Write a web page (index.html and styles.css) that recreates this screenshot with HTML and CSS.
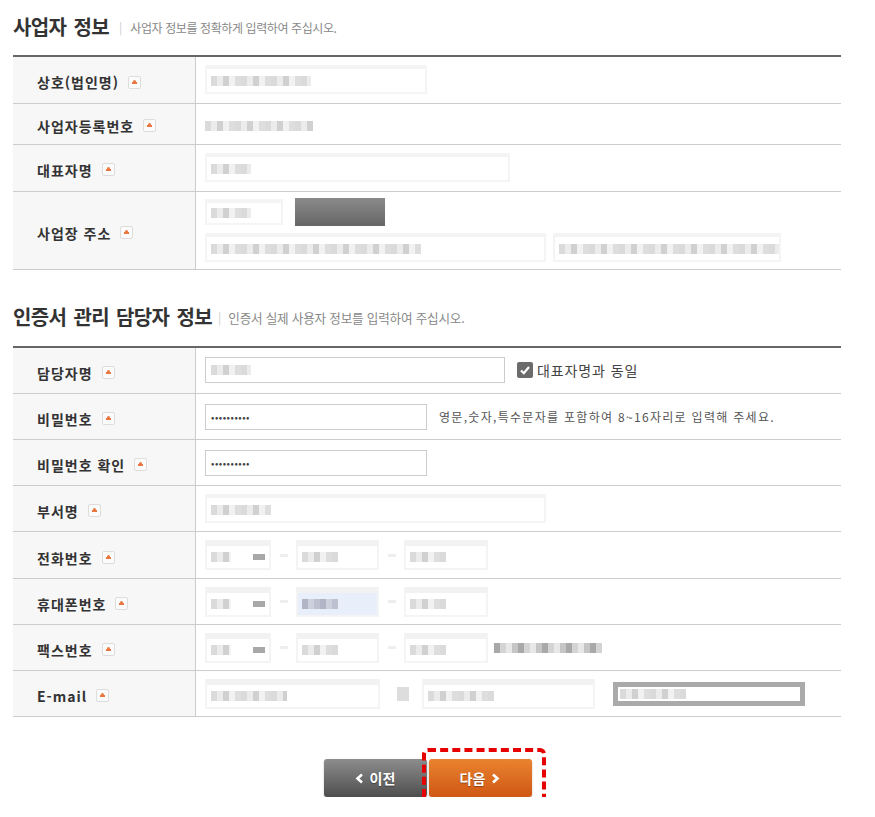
FILE: index.html
```html
<!DOCTYPE html>
<html lang="ko">

<head>
    <meta charset="UTF-8">
    <meta name="viewport" content="width=device-width, initial-scale=1.0">
    <title>사업자 정보 입력</title>
    <link rel="stylesheet" href="styles.css">
</head>

<body>
    <div class="wrap">
        <div class="sec-head">
            <h2>사업자 정보</h2>
            <span class="bar">|</span>
            <span class="desc">사업자 정보를 정확하게 입력하여 주십시오.</span>
        </div>

        <table class="form-table">
            <tr class="h47">
                <th><span class="lbl">상호(법인명)</span><span class="req"></span></th>
                <td><div class="box w222"><span class="mosaic m100"></span></div></td>
            </tr>
            <tr class="h41">
                <th><span class="lbl">사업자등록번호</span><span class="req"></span></th>
                <td><span class="mosaic m108"></span></td>
            </tr>
            <tr class="h47">
                <th><span class="lbl">대표자명</span><span class="req"></span></th>
                <td><div class="box w305"><span class="mosaic m40"></span></div></td>
            </tr>
            <tr class="h78">
                <th><span class="lbl">사업장 주소</span><span class="req"></span></th>
                <td>
                    <div class="line">
                        <div class="box w78 short"><span class="mosaic m40"></span></div>
                        <div class="dark-btn"></div>
                    </div>
                    <div class="line">
                        <div class="box w341"><span class="mosaic m210"></span></div>
                        <div class="box w228"><span class="mosaic m220"></span></div>
                    </div>
                </td>
            </tr>
        </table>

        <div class="sec-head second">
            <h2>인증서 관리 담당자 정보</h2>
            <span class="bar">|</span>
            <span class="desc">인증서 실제 사용자 정보를 입력하여 주십시오.</span>
        </div>

        <table class="form-table">
            <tr class="h47">
                <th><span class="lbl">담당자명</span><span class="req"></span></th>
                <td>
                    <div class="line">
                        <div class="input w300"><span class="mosaic m40"></span></div>
                        <label class="check"><span class="cbox"><svg width="12" height="12" viewBox="0 0 12 12"><path d="M2 6.5 L4.8 9.2 L10 3" fill="none" stroke="#fff" stroke-width="2.2"/></svg></span>대표자명과 동일</label>
                    </div>
                </td>
            </tr>
            <tr>
                <th><span class="lbl">비밀번호</span><span class="req"></span></th>
                <td>
                    <div class="line">
                        <div class="input w222 dots">••••••••••</div>
                        <span class="hint">영문,숫자,특수문자를 포함하여 8~16자리로 입력해 주세요.</span>
                    </div>
                </td>
            </tr>
            <tr>
                <th><span class="lbl">비밀번호 확인</span><span class="req"></span></th>
                <td><div class="input w222 dots">••••••••••</div></td>
            </tr>
            <tr>
                <th><span class="lbl">부서명</span><span class="req"></span></th>
                <td><div class="box w341"><span class="mosaic m60"></span></div></td>
            </tr>
            <tr class="h47">
                <th><span class="lbl">전화번호</span><span class="req"></span></th>
                <td>
                    <div class="line">
                        <div class="box tall w66"><span class="mosaic m20"></span><span class="mosaic m12 dk"></span></div>
                        <span class="dash"></span>
                        <div class="box tall w83"><span class="mosaic m36"></span></div>
                        <span class="dash"></span>
                        <div class="box tall w84"><span class="mosaic m36"></span></div>
                    </div>
                </td>
            </tr>
            <tr>
                <th><span class="lbl">휴대폰번호</span><span class="req"></span></th>
                <td>
                    <div class="line">
                        <div class="box tall w66"><span class="mosaic m20"></span><span class="mosaic m12 dk"></span></div>
                        <span class="dash"></span>
                        <div class="box tall w83 blue"><span class="mosaic m36 bl"></span></div>
                        <span class="dash"></span>
                        <div class="box tall w84"><span class="mosaic m36"></span></div>
                    </div>
                </td>
            </tr>
            <tr>
                <th><span class="lbl">팩스번호</span><span class="req"></span></th>
                <td>
                    <div class="line">
                        <div class="box tall w66"><span class="mosaic m20"></span><span class="mosaic m12 dk"></span></div>
                        <span class="dash"></span>
                        <div class="box tall w83"><span class="mosaic m36"></span></div>
                        <span class="dash"></span>
                        <div class="box tall w84"><span class="mosaic m36"></span></div>
                        <span class="mosaic m108 fax"></span>
                    </div>
                </td>
            </tr>
            <tr>
                <th><span class="lbl">E-mail</span><span class="req"></span></th>
                <td>
                    <div class="line">
                        <div class="box tall w175"><span class="mosaic m76"></span></div>
                        <span class="at"></span>
                        <div class="box tall w173"><span class="mosaic m66"></span></div>
                        <div class="select"><span class="mosaic m66"></span></div>
                    </div>
                </td>
            </tr>
        </table>

        <div class="actions">
            <button class="btn btn-prev"><svg width="9" height="11" viewBox="0 0 9 11"><path d="M7 1.5 L2.5 5.5 L7 9.5" fill="none" stroke="#fff" stroke-width="2.6"/></svg>이전</button>
            <div class="next-wrap">
                <button class="btn btn-next">다음<svg width="9" height="11" viewBox="0 0 9 11"><path d="M2 1.5 L6.5 5.5 L2 9.5" fill="none" stroke="#fff" stroke-width="2.6"/></svg></button>
                <span class="focus-mark"></span>
            </div>
        </div>
    </div>
</body>

</html>
```

FILE: styles.css
```css
body {
    margin: 0;
    background: #fff;
    font-family: "Noto Sans CJK KR", "Noto Sans", sans-serif;
    color: #333;
}

.wrap {
    width: 828px;
    margin-left: 13px;
}

.sec-head {
    height: 52px;
    display: flex;
    align-items: center;
    padding-bottom: 3px;
}

.sec-head.second {
    margin-top: 21px;
}

.sec-head h2 {
    margin: 0;
    font-size: 20px;
    font-weight: 700;
    letter-spacing: -0.6px;
    word-spacing: 2px;
    color: #333;
}

.sec-head .bar {
    margin: 0 8px 0 10px;
    font-size: 12px;
    color: #ccc;
}

.second .bar {
    margin: 0 7px 0 6px;
}

.sec-head .desc {
    font-size: 12px;
    color: #888;
    letter-spacing: -0.4px;
    padding-top: 2px;
}

.second .desc {
    font-size: 12.6px;
    letter-spacing: -0.2px;
}

.form-table {
    width: 100%;
    border-collapse: collapse;
    border-top: 2px solid #666;
}

.form-table tr {
    height: 46px;
    border-bottom: 1px solid #ccc;
}

.form-table tr.h41 { height: 41px; }
.form-table tr.h47 { height: 47px; }
.form-table tr.h78 { height: 78px; }

.form-table th {
    width: 158px;
    padding: 0 0 0 24px;
    background: #f7f7f7;
    border-right: 1px solid #ccc;
    text-align: left;
    font-weight: 700;
    white-space: nowrap;
}

.form-table td {
    padding: 0 0 0 9px;
    vertical-align: middle;
}

.lbl {
    font-size: 14px;
    letter-spacing: 1px;
    color: #333;
    vertical-align: middle;
}

.req {
    display: inline-block;
    width: 11px;
    height: 11px;
    margin-left: 9px;
    border: 1px solid #ddd;
    border-radius: 2px;
    background: #fbfbfb;
    vertical-align: middle;
    position: relative;
}

.req::before {
    content: "";
    position: absolute;
    left: 3px;
    top: 5px;
    width: 5px;
    height: 2px;
    background: #e9773f;
}

.req::after {
    content: "";
    position: absolute;
    left: 4px;
    top: 3px;
    width: 3px;
    height: 3px;
    border-radius: 50%;
    background: #e9773f;
}

.line {
    display: flex;
    align-items: center;
}

.line + .line {
    margin-top: 7px;
}

.box {
    height: 29px;
    box-sizing: border-box;
    border: 2px solid #f4f4f4;
    border-top-width: 4px;
    background: #fff;
    display: flex;
    align-items: center;
    gap: 8px;
    padding-left: 4px;
}

.box.short {
    height: 26px;
}

.box.tall {
    height: 30px;
    border-top: 6px solid #f2f2f2;
}

.box.blue {
    background: #e8eefa;
}

.w66 { width: 66px; }
.w78 { width: 78px; }
.w83 { width: 83px; }
.w84 { width: 84px; }
.w173 { width: 173px; }
.w175 { width: 175px; }
.w222 { width: 222px; }
.w228 { width: 228px; margin-left: 7px; }
.w300 { width: 300px; }
.w305 { width: 305px; }
.w341 { width: 341px; }

.mosaic {
    display: inline-block;
    height: 10px;
    background: repeating-linear-gradient(90deg, #d4d4d4 0 6px, #e8e8e8 6px 12px, #c8c8c8 12px 18px, #efefef 18px 24px, #d8d8d8 24px 30px);
    opacity: 0.85;
}

.mosaic.dk { background: #999; }
.mosaic.bl { background: repeating-linear-gradient(90deg, #a7aabb 0 6px, #c8cbd8 6px 12px, #b5b8c8 12px 18px); }

.m12 { width: 12px; height: 6px; margin-left: auto; margin-right: 4px; }
.m20 { width: 20px; }
.m36 { width: 36px; }
.m40 { width: 40px; }
.m60 { width: 60px; }
.m66 { width: 66px; }
.m76 { width: 76px; }
.m100 { width: 100px; }
.m108 { width: 108px; }
.m210 { width: 210px; }
.m220 { width: 220px; }

.dark-btn {
    width: 90px;
    height: 28px;
    margin-left: 12px;
    background: linear-gradient(#8a8a8a, #666);
}

.input {
    height: 26px;
    box-sizing: border-box;
    border: 1px solid #ccc;
    background: #fff;
    display: flex;
    align-items: center;
    padding-left: 5px;
}

.input.dots {
    font-size: 10px;
    color: #444;
    letter-spacing: 0.5px;
}

.check {
    display: flex;
    align-items: center;
    margin-left: 12px;
    font-size: 14px;
    letter-spacing: 0.9px;
    color: #444;
}

.cbox {
    width: 16px;
    height: 16px;
    margin-right: 4px;
    border-radius: 2px;
    background: #6b6b6b;
    display: flex;
    align-items: center;
    justify-content: center;
}

.hint {
    margin-left: 12px;
    font-size: 12px;
    color: #555;
    letter-spacing: 1.3px;
}

.dash {
    display: inline-block;
    width: 8px;
    height: 3px;
    margin: 0 8px 0 9px;
    background: #eee;
}

.mosaic.fax {
    margin-left: 6px;
    background: repeating-linear-gradient(90deg, #999 0 6px, #ccc 6px 12px, #e3e3e3 12px 18px, #bbb 18px 24px);
}

.at {
    display: inline-block;
    width: 12px;
    height: 14px;
    margin: 0 13px 0 17px;
    background: #ddd;
}

.select {
    width: 192px;
    height: 24px;
    box-sizing: border-box;
    margin-left: 18px;
    border: 5px solid #aaa;
    background: #fff;
    display: flex;
    align-items: center;
    padding-left: 2px;
}

.actions {
    display: flex;
    justify-content: center;
    margin-top: 42px;
    padding-left: 1px;
}

.btn {
    height: 38px;
    width: 103px;
    border: 0;
    border-radius: 3px;
    color: #fff;
    font-family: "Noto Sans CJK KR", sans-serif;
    font-size: 14px;
    font-weight: 700;
    text-shadow: 0 1px 1px rgba(0, 0, 0, 0.35);
    display: flex;
    align-items: center;
    justify-content: center;
    gap: 6px;
    box-shadow: 0 1px 2px rgba(0, 0, 0, 0.25);
}

.btn-prev {
    background: linear-gradient(#8d8d8d, #4e4e4e);
}

.btn-next {
    background: linear-gradient(#ea8330, #cf5714);
}

.next-wrap {
    display: flex;
    position: relative;
    margin-left: 2px;
}

.focus-mark {
    position: absolute;
    left: -7px;
    top: -11px;
    right: -14px;
    bottom: -9px;
    border: 4px dashed #e60000;
    border-radius: 6px;
}
```
